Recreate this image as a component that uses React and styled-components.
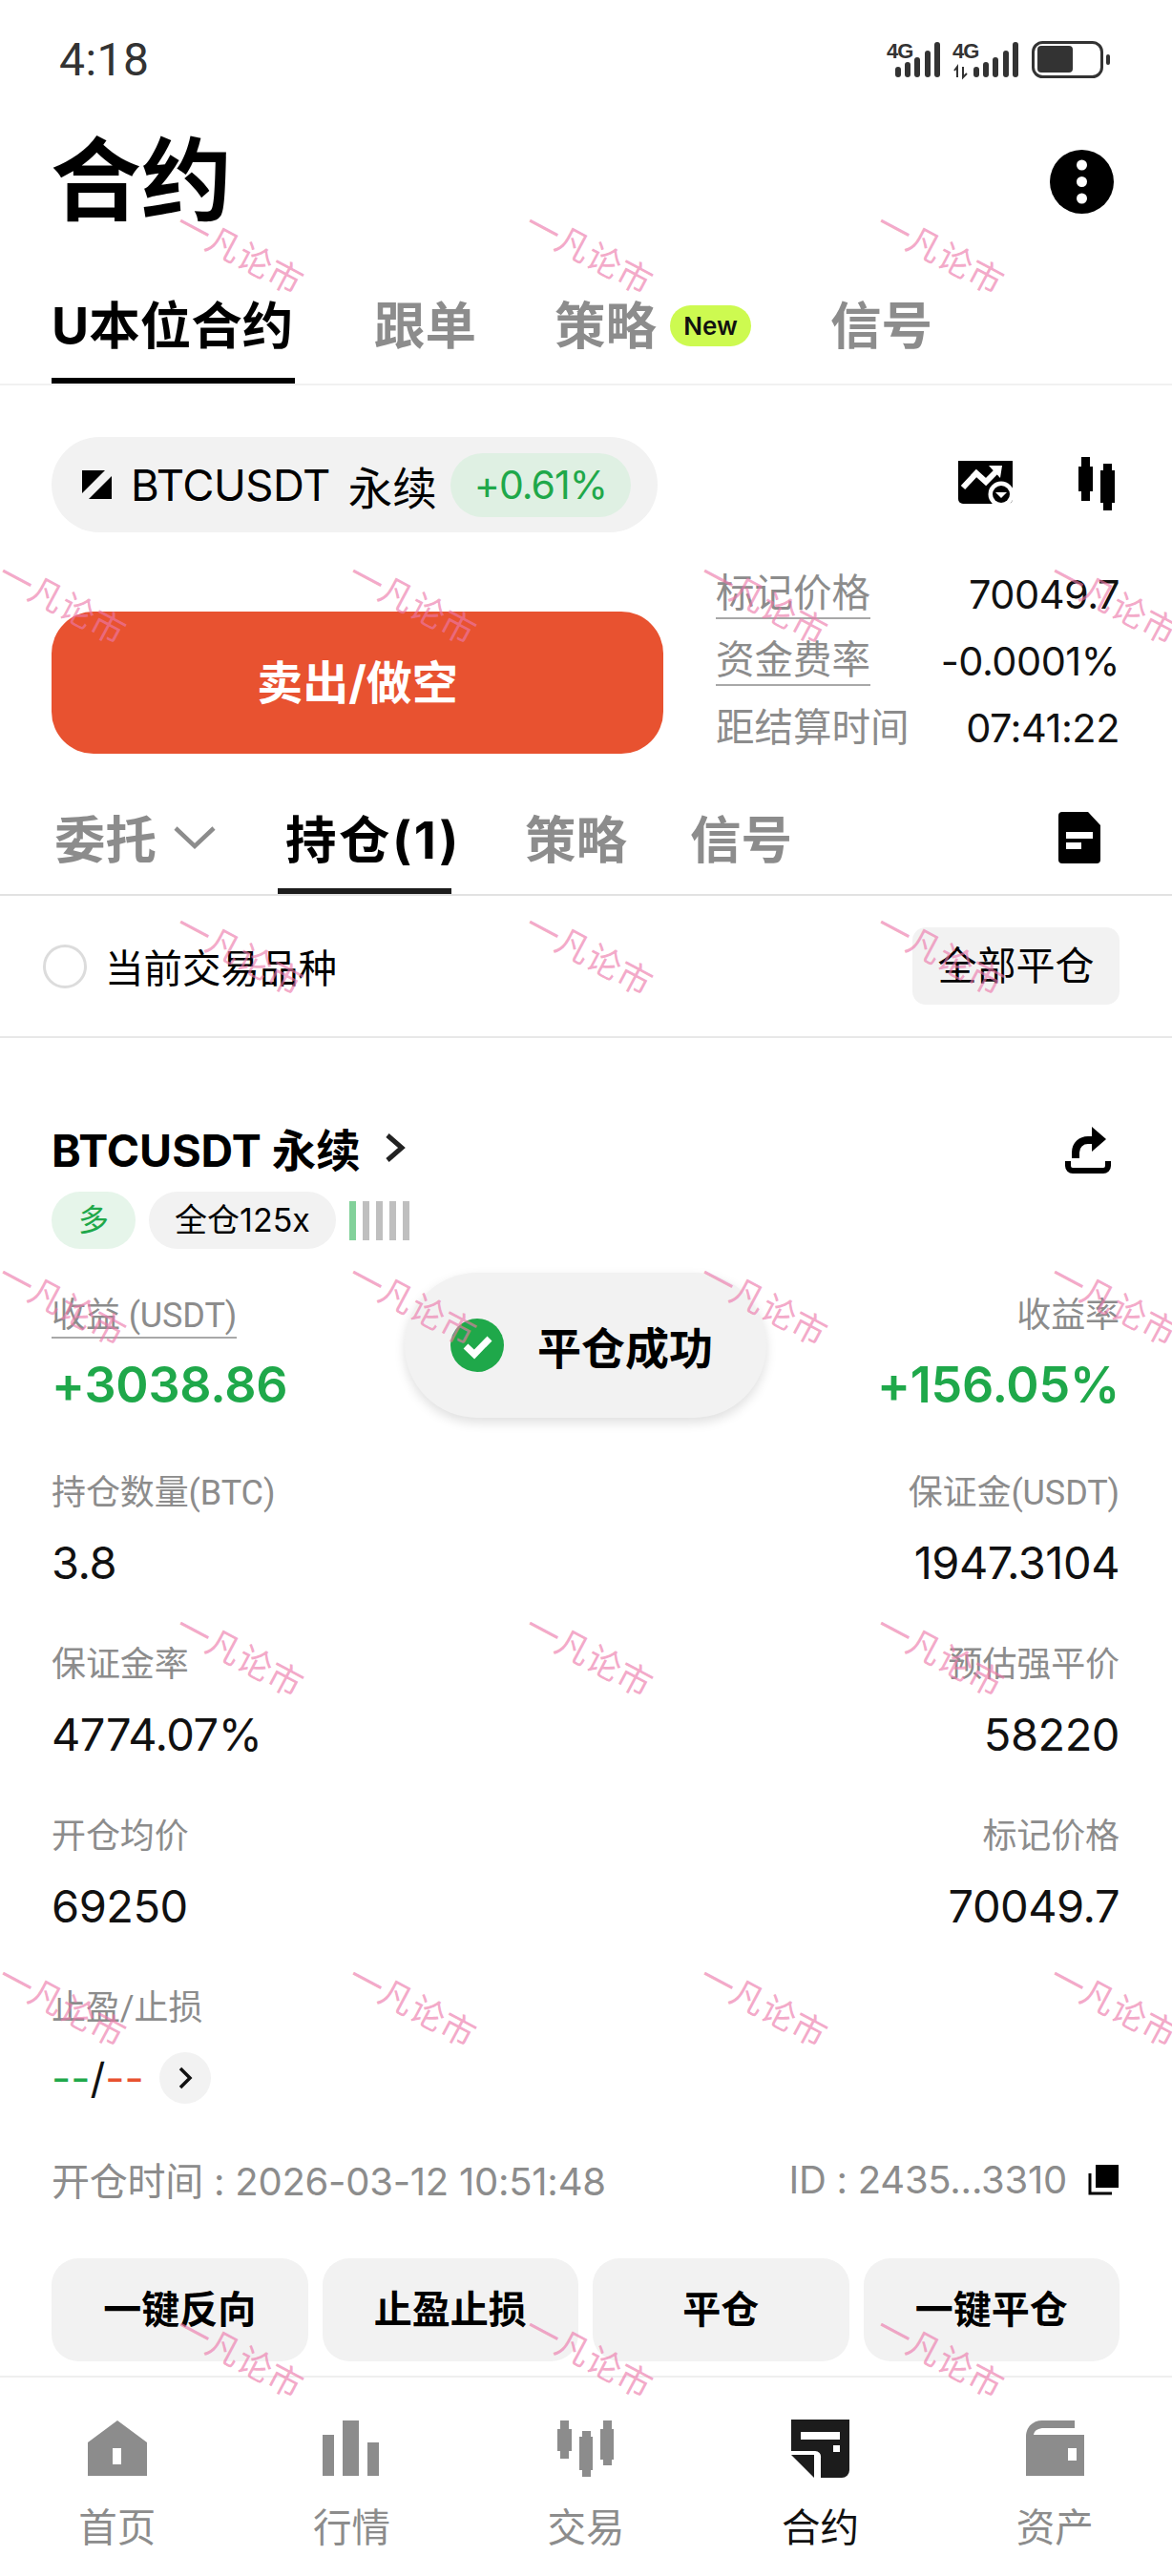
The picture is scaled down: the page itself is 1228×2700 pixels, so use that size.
import React from "react";
import styled, { createGlobalStyle } from "styled-components";

const GlobalStyle = createGlobalStyle`
  html, body {
    margin: 0;
    padding: 0;
    background: #fff;
  }
  * {
    box-sizing: border-box;
  }
`;

const statRows = [
  { left: ["持仓数量(BTC)", "3.8"], right: ["保证金(USDT)", "1947.3104"] },
  { left: ["保证金率", "4774.07%"], right: ["预估强平价", "58220"] },
  { left: ["开仓均价", "69250"], right: ["标记价格", "70049.7"] },
];

const navItems = [
  { label: "首页", Icon: HomeIcon },
  { label: "行情", Icon: BarsIcon },
  { label: "交易", Icon: TradeIcon },
  { label: "合约", Icon: ContractIcon, active: true },
  { label: "资产", Icon: WalletIcon },
];

const stampRows = [265, 632, 1000, 1367, 1735, 2102, 2470];

function App() {
  return (
    <Page>
      <GlobalStyle />
      <StatusBar>
        <Clock>4:18</Clock>
        <StatusIcons />
      </StatusBar>

      <TitleRow>
        <Title>合约</Title>
        <Kebab />
      </TitleRow>

      <MainTabs>
        <MainTab $active>U本位合约</MainTab>
        <MainTab $left={83}>跟单</MainTab>
        <MainTab $left={82}>策略</MainTab>
        <NewBadge>New</NewBadge>
        <MainTab $left={83}>信号</MainTab>
      </MainTabs>

      <PairRow>
        <PairPill>
          <PairLogo />
          <PairName>BTCUSDT</PairName>
          <PairKind>永续</PairKind>
          <ChangeBadge>+0.61%</ChangeBadge>
        </PairPill>
        <PairTools>
          <ChartIcon />
          <CandleIcon />
        </PairTools>
      </PairRow>

      <TradeRow>
        <SellButton>卖出/做空</SellButton>
        <InfoList>
          <InfoRow>
            <InfoLabel $dashed>标记价格</InfoLabel>
            <InfoValue>70049.7</InfoValue>
          </InfoRow>
          <InfoRow>
            <InfoLabel $dashed>资金费率</InfoLabel>
            <InfoValue>-0.0001%</InfoValue>
          </InfoRow>
          <InfoRow>
            <InfoLabel>距结算时间</InfoLabel>
            <InfoValue>07:41:22</InfoValue>
          </InfoRow>
        </InfoList>
      </TradeRow>

      <SubTabs>
        <SubTab>委托</SubTab>
        <ChevronDown />
        <SubTab $active $left={65}>
          持仓(1)
        </SubTab>
        <SubTab $left={77}>策略</SubTab>
        <SubTab $left={66}>信号</SubTab>
        <DocIcon />
      </SubTabs>

      <FilterRow>
        <Radio />
        <FilterLabel>当前交易品种</FilterLabel>
        <CloseAll>全部平仓</CloseAll>
      </FilterRow>

      <Position>
        <PositionHead>
          <PositionName>BTCUSDT 永续</PositionName>
          <HeadChevron />
          <ShareIcon />
        </PositionHead>
        <Tags>
          <SideTag>多</SideTag>
          <MarginTag>全仓125x</MarginTag>
          <RiskBars>
            <RiskBar $on />
            <RiskBar />
            <RiskBar />
            <RiskBar />
            <RiskBar />
          </RiskBars>
        </Tags>

        <ProfitRow>
          <Stat>
            <StatLabel $dashed>收益 (USDT)</StatLabel>
            <ProfitValue>+3038.86</ProfitValue>
          </Stat>
          <Stat $right>
            <StatLabel>收益率</StatLabel>
            <ProfitValue>+156.05%</ProfitValue>
          </Stat>
        </ProfitRow>

        {statRows.map((row) => (
          <StatRow key={row.left[0]}>
            <Stat>
              <StatLabel>{row.left[0]}</StatLabel>
              <StatValue>{row.left[1]}</StatValue>
            </Stat>
            <Stat $right>
              <StatLabel>{row.right[0]}</StatLabel>
              <StatValue>{row.right[1]}</StatValue>
            </Stat>
          </StatRow>
        ))}

        <StatRow>
          <Stat>
            <StatLabel>止盈/止损</StatLabel>
            <StopValue>
              <Tp>--</Tp>/<Sl>--</Sl>
              <RoundArrow />
            </StopValue>
          </Stat>
        </StatRow>

        <MetaRow>
          <MetaText>开仓时间 : 2026-03-12 10:51:48</MetaText>
          <MetaId>
            <MetaText>ID : 2435...3310</MetaText>
            <CopyIcon />
          </MetaId>
        </MetaRow>

        <Actions>
          <ActionButton>一键反向</ActionButton>
          <ActionButton>止盈止损</ActionButton>
          <ActionButton>平仓</ActionButton>
          <ActionButton>一键平仓</ActionButton>
        </Actions>
      </Position>

      <Nav>
        {navItems.map(({ label, Icon, active }) => (
          <NavItem key={label} $active={active}>
            <NavIconBox>
              <Icon />
            </NavIconBox>
            {label}
          </NavItem>
        ))}
      </Nav>

      <Toast>
        <CheckIcon />
        平仓成功
      </Toast>

      <Stamps>
        {stampRows.map((y, row) =>
          (row % 2 ? [65, 432, 800, 1167] : [251, 617, 985]).map((x) => (
            <Stamp key={`${x}-${y}`} style={{ left: x, top: y }}>
              一凡论市
            </Stamp>
          ))
        )}
      </Stamps>
    </Page>
  );
}

export default App;

function StatusIcons() {
  const bars1 = [
    [936, 68],
    [946, 63],
    [956, 58],
    [967, 51],
    [977, 42],
  ];
  const bars2 = [
    [1018, 68],
    [1028, 63],
    [1038, 58],
    [1049, 51],
    [1059, 42],
  ];
  return (
    <StatusSvg viewBox="925 38 240 44">
      {[...bars1, ...bars2].map(([x, y]) => (
        <rect key={x} x={x} y={y} width="6" height={79 - y} rx="3" fill="#333" />
      ))}
      <SignalText x="927" y="59">
        4G
      </SignalText>
      <SignalText x="996" y="59">
        4G
      </SignalText>
      <path d="M1001 79V68l-3 4M1007 68v11l4-4" stroke="#333" strokeWidth="2" fill="none" />
      <rect x="1080.5" y="42.5" width="72" height="36" rx="10" fill="none" stroke="#333" strokeWidth="3" />
      <rect x="1085" y="46" width="37" height="28" rx="4" fill="#333" />
      <rect x="1157" y="55" width="4" height="11" rx="2" fill="#333" />
    </StatusSvg>
  );
}

function Kebab() {
  return (
    <svg width="67" height="67" viewBox="0 0 67 67">
      <circle cx="33.5" cy="33.5" r="33.5" fill="#000" />
      <circle cx="33.5" cy="16" r="5.5" fill="#fff" />
      <circle cx="33.5" cy="33.5" r="5.5" fill="#fff" />
      <circle cx="33.5" cy="51" r="5.5" fill="#fff" />
    </svg>
  );
}

function PairLogo() {
  return (
    <svg width="32" height="31" viewBox="0 0 32 31">
      <path d="M0 0H24L0 24Z" fill="#000" />
      <path d="M31 6V30H7Z" fill="#000" />
    </svg>
  );
}

function ChartIcon() {
  return (
    <svg width="60" height="50" viewBox="0 0 60 50">
      <path d="M0 0H57V40a5 5 0 0 1-5 5H5a5 5 0 0 1-5-5Z" fill="#000" />
      <path d="M5 28L19 13L29 22L42 9" stroke="#fff" strokeWidth="6" fill="none" />
      <path d="M32 5H46L44 18Z" fill="#fff" />
      <circle cx="45" cy="35" r="13.5" fill="#fff" />
      <circle cx="45" cy="35" r="9" fill="#000" />
      <path d="M39 33H51L45 39Z" fill="#fff" />
    </svg>
  );
}

function CandleIcon() {
  return (
    <svg width="38" height="58" viewBox="0 0 38 58">
      <path d="M3 0H12V10H15V36H12V46H3V36H0V10H3Z" fill="#000" />
      <path d="M26 7H35V14H38V48H35V56H26V48H23V14H26Z" fill="#000" />
    </svg>
  );
}

function ChevronDown() {
  return (
    <ChevronBox width="44" height="26" viewBox="0 0 44 26">
      <path d="M2 3L22 22L42 3" stroke="#8c8c8c" strokeWidth="4.5" fill="none" />
    </ChevronBox>
  );
}

function DocIcon() {
  return (
    <DocBox width="44" height="54" viewBox="0 0 44 54">
      <path d="M0 4a4 4 0 0 1 4-4H31L44 14V50a4 4 0 0 1-4 4H4a4 4 0 0 1-4-4Z" fill="#000" />
      <rect x="8" y="21" width="28" height="7" fill="#fff" />
      <rect x="8" y="32" width="16" height="7" fill="#fff" />
    </DocBox>
  );
}

function HeadChevron() {
  return (
    <HeadChevronBox width="22" height="30" viewBox="0 0 22 30">
      <path d="M3 2L18 15L3 28" stroke="#222" strokeWidth="5" fill="none" />
    </HeadChevronBox>
  );
}

function ShareIcon() {
  return (
    <ShareBox width="50" height="50" viewBox="0 0 50 50">
      <path d="M3 36V41a5 5 0 0 0 5 5H40a5 5 0 0 0 5-5V36" stroke="#000" strokeWidth="6" fill="none" />
      <path d="M11 33V27C11 19 17 14 24 14H30" stroke="#000" strokeWidth="8" fill="none" />
      <path d="M28 0L43 13L28 26Z" fill="#000" />
    </ShareBox>
  );
}

function RoundArrow() {
  return (
    <ArrowCircle>
      <svg width="16" height="24" viewBox="0 0 16 24">
        <path d="M3 2L13 12L3 22" stroke="#111" strokeWidth="3.5" fill="none" />
      </svg>
    </ArrowCircle>
  );
}

function CopyIcon() {
  return (
    <svg width="33" height="33" viewBox="0 0 33 33">
      <rect x="8" y="1" width="24" height="24" fill="#000" />
      <path d="M2 10V31H25" stroke="#000" strokeWidth="3" fill="none" />
    </svg>
  );
}

function CheckIcon() {
  return (
    <ToastIcon width="56" height="56" viewBox="0 0 56 56">
      <circle cx="28" cy="28" r="28" fill="#1fa84a" />
      <path d="M16 29L25 37.5L41 21" stroke="#fff" strokeWidth="7" fill="none" />
    </ToastIcon>
  );
}

function HomeIcon() {
  return (
    <svg width="62" height="60" viewBox="0 0 62 60">
      <path fillRule="evenodd" d="M31 1L62 24V59H0V24ZM26 30V47H35V30Z" fill="#8c8c8c" />
    </svg>
  );
}

function BarsIcon() {
  return (
    <svg width="60" height="60" viewBox="0 0 60 60">
      <rect x="0" y="16" width="12" height="43" fill="#8c8c8c" />
      <rect x="21" y="1" width="17" height="58" fill="#8c8c8c" />
      <rect x="47" y="24" width="12" height="35" fill="#8c8c8c" />
    </svg>
  );
}

function TradeIcon() {
  return (
    <svg width="60" height="60" viewBox="0 0 60 60">
      <path d="M3 1H12V10H15V33H12V41H3V33H0V10H3Z" fill="#8c8c8c" />
      <path d="M26 12H35V18H37V53H35V60H26V53H23V18H26Z" fill="#8c8c8c" />
      <path d="M48 1H57V10H59V42H57V48H48V42H45V10H48Z" fill="#8c8c8c" />
    </svg>
  );
}

function ContractIcon() {
  return (
    <svg width="61" height="61" viewBox="0 0 61 61">
      <path
        fillRule="evenodd"
        d="M0 0H61V53a8 8 0 0 1-8 8H31V40a6 6 0 0 0-6-7H0ZM10 13V21H51V13ZM44 27V34H51V27Z"
        fill="#1c1c1c"
      />
      <path d="M0 37H24V61Z" fill="#1c1c1c" />
    </svg>
  );
}

function WalletIcon() {
  return (
    <svg width="61" height="59" viewBox="0 0 61 59">
      <path
        fillRule="evenodd"
        d="M0 59V18C0 8 7 1 17 1H51V9H19C13 9 9 11 8 16H61V59ZM44 30V43H53V30Z"
        fill="#8c8c8c"
      />
    </svg>
  );
}

const Page = styled.div`
  position: relative;
  width: 1228px;
  height: 2700px;
  overflow: hidden;
  background: #fff;
  color: #000;
  font-family: Inter, "Noto Sans CJK SC", sans-serif;
`;

const StatusBar = styled.div`
  display: flex;
  align-items: center;
  justify-content: space-between;
  height: 124px;
  padding: 0 62px;
`;

const Clock = styled.div`
  font-family: Roboto, sans-serif;
  font-size: 48px;
  color: #333;
  letter-spacing: 0.5px;
`;

const StatusSvg = styled.svg`
  width: 240px;
  height: 44px;
  margin-right: -1px;
`;

const SignalText = styled.text`
  font-family: "Liberation Sans", sans-serif;
  font-size: 22px;
  font-weight: 700;
  fill: #333;
  letter-spacing: -1px;
`;

const TitleRow = styled.div`
  display: flex;
  align-items: center;
  justify-content: space-between;
  height: 132px;
  padding: 0 61px 0 53px;
`;

const Title = styled.h1`
  margin: 0;
  font-size: 95px;
  font-weight: 700;
  line-height: 132px;
`;

const MainTabs = styled.div`
  display: flex;
  align-items: flex-start;
  height: 148px;
  padding: 50px 0 0 54px;
  border-bottom: 2px solid #f1f1f1;
`;

const MainTab = styled.div`
  width: ${(p) => (p.$active ? "255px" : "auto")};
  height: 96px;
  margin-left: ${(p) => p.$left || 0}px;
  font-size: 53.5px;
  font-weight: 700;
  line-height: 72px;
  color: ${(p) => (p.$active ? "#000" : "#8c8c8c")};
  border-bottom: 6px solid ${(p) => (p.$active ? "#000" : "transparent")};
`;

const NewBadge = styled.div`
  width: 85px;
  height: 43px;
  margin: 14px 0 0 14px;
  border-radius: 22px;
  background: #cdfa50;
  color: #111;
  font-size: 26px;
  font-weight: 600;
  line-height: 43px;
  text-align: center;
`;

const PairRow = styled.div`
  display: flex;
  align-items: center;
  justify-content: space-between;
  margin-top: 54px;
  padding: 0 60px 0 54px;
`;

const PairPill = styled.div`
  display: flex;
  align-items: center;
  width: 635px;
  height: 100px;
  padding-left: 32px;
  border-radius: 50px;
  background: #f2f2f2;
`;

const PairName = styled.span`
  margin-left: 19px;
  font-size: 45.5px;
  letter-spacing: -0.5px;
`;

const PairKind = styled.span`
  margin-left: 19px;
  font-size: 46.5px;
`;

const ChangeBadge = styled.span`
  width: 189px;
  height: 67px;
  margin-left: 14px;
  border-radius: 34px;
  background: #dff0e3;
  color: #1fa84a;
  font-size: 41px;
  line-height: 67px;
  text-align: center;
  letter-spacing: -1px;
`;

const PairTools = styled.div`
  display: flex;
  align-items: center;
  gap: 66px;
`;

const TradeRow = styled.div`
  display: flex;
  gap: 55px;
  height: 210px;
  margin-top: 30px;
  padding-left: 54px;
`;

const SellButton = styled.div`
  width: 641px;
  height: 149px;
  margin-top: 53px;
  border-radius: 44px;
  background: #e85230;
  color: #fff;
  font-size: 48px;
  font-weight: 700;
  line-height: 149px;
  text-align: center;
`;

const InfoList = styled.div`
  display: flex;
  flex-direction: column;
  width: 423px;
`;

const InfoRow = styled.div`
  display: flex;
  align-items: center;
  justify-content: space-between;
  height: 70px;
`;

const InfoLabel = styled.span`
  font-size: 40.5px;
  line-height: 50px;
  color: #8c8c8c;
  border-bottom: ${(p) => (p.$dashed ? "2px solid #a8a8a8" : "none")};
`;

const InfoValue = styled.span`
  font-size: 41.5px;
  color: #111;
  letter-spacing: -0.5px;
`;

const SubTabs = styled.div`
  display: flex;
  align-items: flex-start;
  height: 141px;
  padding: 48px 0 0 57px;
  border-bottom: 2px solid #e2e2e2;
`;

const SubTab = styled.div`
  width: ${(p) => (p.$active ? "182px" : "auto")};
  height: 91px;
  margin-left: ${(p) => p.$left || 0}px;
  padding-left: ${(p) => (p.$active ? "8px" : 0)};
  font-size: 53.5px;
  font-weight: 700;
  line-height: 70px;
  white-space: nowrap;
  letter-spacing: ${(p) => (p.$active ? "2.5px" : 0)};
  color: ${(p) => (p.$active ? "#000" : "#8c8c8c")};
  border-bottom: 6px solid ${(p) => (p.$active ? "#1c1c1c" : "transparent")};
`;

const ChevronBox = styled.svg`
  flex: none;
  margin: 19px 0 0 18px;
`;

const HeadChevronBox = styled.svg`
  flex: none;
  margin: 0 0 6px 25px;
`;

const DocBox = styled.svg`
  margin: 5px 75px 0 auto;
`;

const FilterRow = styled.div`
  display: flex;
  align-items: center;
  height: 149px;
  padding: 0 55px 0 45px;
  border-bottom: 2px solid #e8e8e8;
`;

const Radio = styled.div`
  width: 46px;
  height: 46px;
  border: 3px solid #dcdcdc;
  border-radius: 50%;
`;

const FilterLabel = styled.span`
  margin-left: 19px;
  font-size: 40.5px;
`;

const CloseAll = styled.div`
  width: 217px;
  height: 81px;
  margin-left: auto;
  border-radius: 14px;
  background: #f2f2f2;
  font-size: 41px;
  line-height: 81px;
  text-align: center;
`;

const Position = styled.div`
  padding: 88px 55px 0 54px;
`;

const PositionHead = styled.div`
  display: flex;
  align-items: center;
  height: 60px;
`;

const PositionName = styled.span`
  font-size: 46.5px;
  font-weight: 700;
  line-height: 60px;
`;

const ShareBox = styled.svg`
  margin-left: auto;
  margin-right: 7px;
`;

const Tags = styled.div`
  display: flex;
  align-items: center;
  gap: 14px;
  margin-top: 13px;
`;

const SideTag = styled.div`
  width: 88px;
  height: 60px;
  border-radius: 30px;
  background: #e6f5ea;
  color: #1fa84a;
  font-size: 32px;
  line-height: 60px;
  text-align: center;
`;

const MarginTag = styled.div`
  width: 196px;
  height: 60px;
  border-radius: 30px;
  background: #f2f2f2;
  font-size: 34px;
  line-height: 60px;
  text-align: center;
`;

const RiskBars = styled.div`
  display: flex;
  gap: 7px;
`;

const RiskBar = styled.div`
  width: 7px;
  height: 41px;
  background: ${(p) => (p.$on ? "#82d19a" : "#bfbfbf")};
`;

const ProfitRow = styled.div`
  display: flex;
  justify-content: space-between;
  margin-top: 44px;
  margin-bottom: 57px;
`;

const StatRow = styled.div`
  display: flex;
  justify-content: space-between;
  margin-bottom: 51px;
`;

const Stat = styled.div`
  display: flex;
  flex-direction: column;
  align-items: ${(p) => (p.$right ? "flex-end" : "flex-start")};
  gap: 19px;
`;

const StatLabel = styled.span`
  height: 50px;
  padding-top: 3px;
  font-family: Roboto, "Noto Sans CJK SC", sans-serif;
  font-size: 36px;
  line-height: 46px;
  letter-spacing: -0.1px;
  color: #8c8c8c;
  border-bottom: ${(p) => (p.$dashed ? "2px solid #a8a8a8" : "none")};
`;

const ProfitValue = styled.span`
  font-size: 52px;
  font-weight: 600;
  line-height: 60px;
  letter-spacing: -0.2px;
  color: #1fa84a;
`;

const StatValue = styled.span`
  font-size: 47px;
  line-height: 60px;
  letter-spacing: -0.5px;
  color: #111;
`;

const StopValue = styled.span`
  display: flex;
  align-items: center;
  font-size: 44px;
  line-height: 60px;
  color: #111;
`;

const Tp = styled.span`
  color: #1fa84a;
`;

const Sl = styled.span`
  color: #e85230;
`;

const ArrowCircle = styled.span`
  display: flex;
  align-items: center;
  justify-content: center;
  width: 54px;
  height: 54px;
  margin-left: 16px;
  border-radius: 50%;
  background: #f2f2f2;
`;

const MetaRow = styled.div`
  display: flex;
  align-items: center;
  justify-content: space-between;
  height: 50px;
  margin-top: 2px;
`;

const MetaId = styled.div`
  display: flex;
  align-items: center;
  gap: 22px;
`;

const MetaText = styled.span`
  font-size: 40px;
  letter-spacing: -0.25px;
  color: #8c8c8c;
`;

const Actions = styled.div`
  display: grid;
  grid-template-columns: repeat(4, 1fr);
  gap: 15px;
  margin-top: 58px;
`;

const ActionButton = styled.div`
  height: 108px;
  border-radius: 28px;
  background: #f2f2f2;
  font-size: 40px;
  font-weight: 700;
  line-height: 108px;
  text-align: center;
`;

const Nav = styled.div`
  position: absolute;
  left: 0;
  right: 0;
  bottom: 0;
  display: grid;
  grid-template-columns: repeat(5, 1fr);
  height: 210px;
  border-top: 2px solid #efefef;
`;

const NavItem = styled.div`
  display: flex;
  flex-direction: column;
  align-items: center;
  padding-top: 44px;
  font-size: 40.5px;
  line-height: 50px;
  color: ${(p) => (p.$active ? "#111" : "#8c8c8c")};
`;

const NavIconBox = styled.div`
  height: 62px;
  margin-bottom: 27px;
`;

const Toast = styled.div`
  position: absolute;
  top: 1334px;
  left: 424px;
  display: flex;
  align-items: center;
  width: 379px;
  height: 152px;
  padding-left: 48px;
  border-radius: 76px;
  background: #f2f2f2;
  box-shadow: 0 5px 12px rgba(0, 0, 0, 0.13);
  font-size: 46px;
  font-weight: 700;
`;

const ToastIcon = styled.svg`
  margin-right: 35px;
`;

const Stamps = styled.div`
  position: absolute;
  inset: 0;
  pointer-events: none;
`;

const Stamp = styled.div`
  position: absolute;
  font-size: 36px;
  line-height: 40px;
  white-space: nowrap;
  color: rgba(236, 120, 170, 0.65);
  transform: translate(-50%, -50%) rotate(28deg);
`;
